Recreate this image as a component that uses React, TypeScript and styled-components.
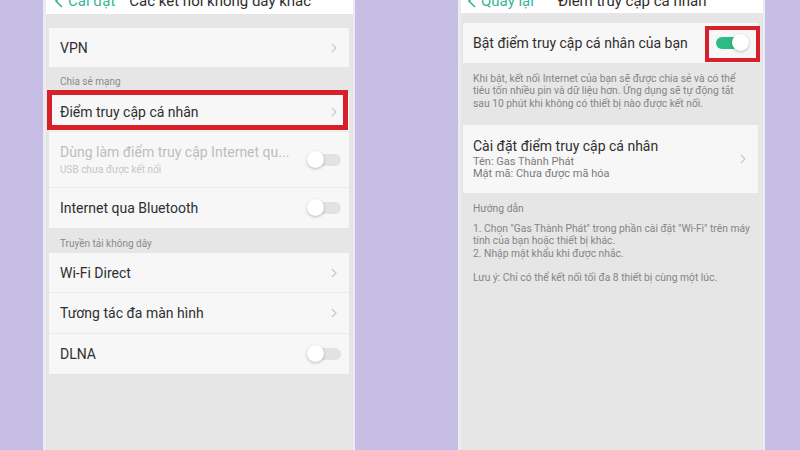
import styled, { createGlobalStyle } from "styled-components";

const GlobalStyle = createGlobalStyle`
  html, body { margin: 0; padding: 0; }
  body {
    width: 800px;
    height: 450px;
    overflow: hidden;
    background: #c6bee4;
    font-family: Roboto, "Noto Sans", "DejaVu Sans", sans-serif;
  }
`;

const Stage = styled.div`
  display: flex;
  height: 450px;
  padding-left: 43px;
  gap: 103px;
`;

const Phone = styled.div<{ $w: number }>`
  width: ${(p) => p.$w}px;
  height: 450px;
  box-sizing: border-box;
  background: #e6e6e6;
  border-left: 3px solid #ecebf1;
  border-right: 2px solid #ecebf1;
  display: flex;
  flex-direction: column;
  overflow: hidden;
`;

const Header = styled.div<{ $h: number; $pl: number }>`
  height: ${(p) => p.$h}px;
  background: #fff;
  overflow: hidden;
  display: flex;
  align-items: flex-start;
  padding-left: ${(p) => p.$pl}px;
  font-size: 15px;
  line-height: 16px;
  white-space: nowrap;
`;

const HeaderInner = styled.div`
  display: flex;
  align-items: center;
  margin-top: -7px;
`;

const Back = styled.span`
  display: flex;
  align-items: center;
  gap: 5px;
  color: #36b597;
`;

const Title = styled.span<{ $ml: number }>`
  color: #2e2e2e;
  margin-left: ${(p) => p.$ml}px;
`;

const Body = styled.div<{ $pl: number; $pr: number }>`
  padding: 0 ${(p) => p.$pr}px 0 ${(p) => p.$pl}px;
  display: flex;
  flex-direction: column;
`;

const Card = styled.div<{ $mt?: number }>`
  background: #f7f7f7;
  margin-top: ${(p) => p.$mt ?? 0}px;
  display: flex;
  flex-direction: column;
`;

const Row = styled.div<{ $h: number; $pl?: number }>`
  position: relative;
  box-sizing: border-box;
  height: ${(p) => p.$h}px;
  display: flex;
  align-items: center;
  padding: 0 8px 0 ${(p) => p.$pl ?? 11}px;
  & + & {
    border-top: 1px solid #ebebeb;
  }
`;

const RowText = styled.div`
  flex: 1;
  min-width: 0;
  display: flex;
  flex-direction: column;
`;

const Main = styled.div<{ $muted?: boolean }>`
  font-size: 14px;
  line-height: 18px;
  color: ${(p) => (p.$muted ? "#bdbdbd" : "#2f2f2f")};
  white-space: nowrap;
`;

const Sub = styled.div<{ $muted?: boolean; $mt?: number }>`
  font-size: ${(p) => (p.$muted ? 10 : 11)}px;
  line-height: 12px;
  margin-top: ${(p) => p.$mt ?? 0}px;
  color: ${(p) => (p.$muted ? "#c6c6c6" : "#7a7a7a")};
  white-space: nowrap;
`;

const SectionLabel = styled.div<{ $pt: number }>`
  height: 25px;
  box-sizing: border-box;
  padding: ${(p) => p.$pt}px 0 0 11px;
  font-size: 10px;
  line-height: 11px;
  color: #8a8a8a;
`;

const Note = styled.div<{ $pt: number; $mb?: number }>`
  padding: ${(p) => p.$pt}px 0 0 10px;
  margin-bottom: ${(p) => p.$mb ?? 0}px;
  font-size: 10.3px;
  line-height: 12.3px;
  color: #858585;
  white-space: pre;
`;

const Track = styled.div<{ $on?: boolean }>`
  position: relative;
  width: 30px;
  height: 12px;
  border-radius: 6px;
  background: ${(p) => (p.$on ? "#2dbb83" : "#e2e2e2")};
  margin-right: ${(p) => (p.$on ? 4 : 0)}px;
`;

const Knob = styled.div<{ $on?: boolean }>`
  position: absolute;
  top: -3px;
  ${(p) => (p.$on ? "right: -3px;" : "left: -4px;")}
  width: 17px;
  height: 17px;
  border-radius: 50%;
  background: #fff;
  box-shadow: 0 1px 3px rgba(0, 0, 0, 0.25);
`;

const Highlight = styled.div<{ $t: number; $r: number; $b: number; $l: number; $bw: number }>`
  position: absolute;
  top: ${(p) => p.$t}px;
  right: ${(p) => p.$r}px;
  bottom: ${(p) => p.$b}px;
  left: ${(p) => p.$l}px;
  border: ${(p) => p.$bw}px solid #d8202b;
  pointer-events: none;
`;

const Chev = () => (
  <svg width="6" height="10" viewBox="0 0 6 10" style={{ marginRight: 4 }}>
    <polyline points="1,1 5,5 1,9" fill="none" stroke="#c9c9c9" strokeWidth="1.2" />
  </svg>
);

const BackChev = () => (
  <svg width="8" height="14" viewBox="0 0 8 14">
    <polyline points="7,1 1,7 7,13" fill="none" stroke="#36b597" strokeWidth="1.6" />
  </svg>
);

const Toggle = ({ on }: { on?: boolean }) => (
  <Track $on={on}>
    <Knob $on={on} />
  </Track>
);

export default function App() {
  return (
    <>
      <GlobalStyle />
      <Stage>
        <Phone $w={312}>
          <Header $h={14} $pl={9}>
            <HeaderInner>
              <Back>
                <BackChev />
                Cài đặt
              </Back>
              <Title $ml={14}>Các kết nối không dây khác</Title>
            </HeaderInner>
          </Header>
          <Body $pl={3} $pr={4}>
            <Card $mt={14}>
              <Row $h={39}>
                <RowText><Main>VPN</Main></RowText>
                <Chev />
              </Row>
            </Card>
            <SectionLabel $pt={9}>Chia sẻ mạng</SectionLabel>
            <Card>
              <Row $h={39}>
                <RowText><Main>Điểm truy cập cá nhân</Main></RowText>
                <Chev />
                <Highlight $t={-2} $r={1} $b={1} $l={-2} $bw={5} />
              </Row>
              <Row $h={56}>
                <RowText>
                  <Main $muted>Dùng làm điểm truy cập Internet qu...</Main>
                  <Sub $muted $mt={3}>USB chưa được kết nối</Sub>
                </RowText>
                <Toggle />
              </Row>
              <Row $h={41}>
                <RowText><Main>Internet qua Bluetooth</Main></RowText>
                <Toggle />
              </Row>
            </Card>
            <SectionLabel $pt={10}>Truyền tải không dây</SectionLabel>
            <Card>
              <Row $h={39}>
                <RowText><Main>Wi-Fi Direct</Main></RowText>
                <Chev />
              </Row>
              <Row $h={41}>
                <RowText><Main>Tương tác đa màn hình</Main></RowText>
                <Chev />
              </Row>
              <Row $h={41}>
                <RowText><Main>DLNA</Main></RowText>
                <Toggle />
              </Row>
            </Card>
          </Body>
        </Phone>

        <Phone $w={307}>
          <Header $h={13} $pl={7}>
            <HeaderInner>
              <Back>
                <BackChev />
                Quay lại
              </Back>
              <Title $ml={24}>Điểm truy cập cá nhân</Title>
            </HeaderInner>
          </Header>
          <Body $pl={2} $pr={5}>
            <Card $mt={10}>
              <Row $h={40} $pl={10}>
                <RowText><Main>Bật điểm truy cập cá nhân của bạn</Main></RowText>
                <div style={{ position: "relative" }}>
                  <Toggle on />
                  <Highlight $t={-11} $r={-10} $b={-13} $l={-11} $bw={4} />
                </div>
              </Row>
            </Card>
            <Note $pt={10} $mb={15}>
              {"Khi bật, kết nối Internet của bạn sẽ được chia sẻ và có thể\ntiêu tốn nhiều pin và dữ liệu hơn. Ứng dụng sẽ tự động tắt\nsau 10 phút khi không có thiết bị nào được kết nối."}
            </Note>
            <Card>
              <Row $h={68} $pl={10}>
                <RowText>
                  <Main>Cài đặt điểm truy cập cá nhân</Main>
                  <Sub $mt={1}>Tên: Gas Thành Phát</Sub>
                  <Sub>Mật mã: Chưa được mã hóa</Sub>
                </RowText>
                <Chev />
              </Row>
            </Card>
            <Note $pt={10}>Hướng dẫn</Note>
            <Note $pt={8}>
              {"1. Chọn \"Gas Thành Phát\" trong phần cài đặt \"Wi-Fi\" trên máy\ntính của bạn hoặc thiết bị khác.\n2. Nhập mật khẩu khi được nhắc.\n\nLưu ý: Chỉ có thể kết nối tối đa 8 thiết bị cùng một lúc."}
            </Note>
          </Body>
        </Phone>
      </Stage>
    </>
  );
}
